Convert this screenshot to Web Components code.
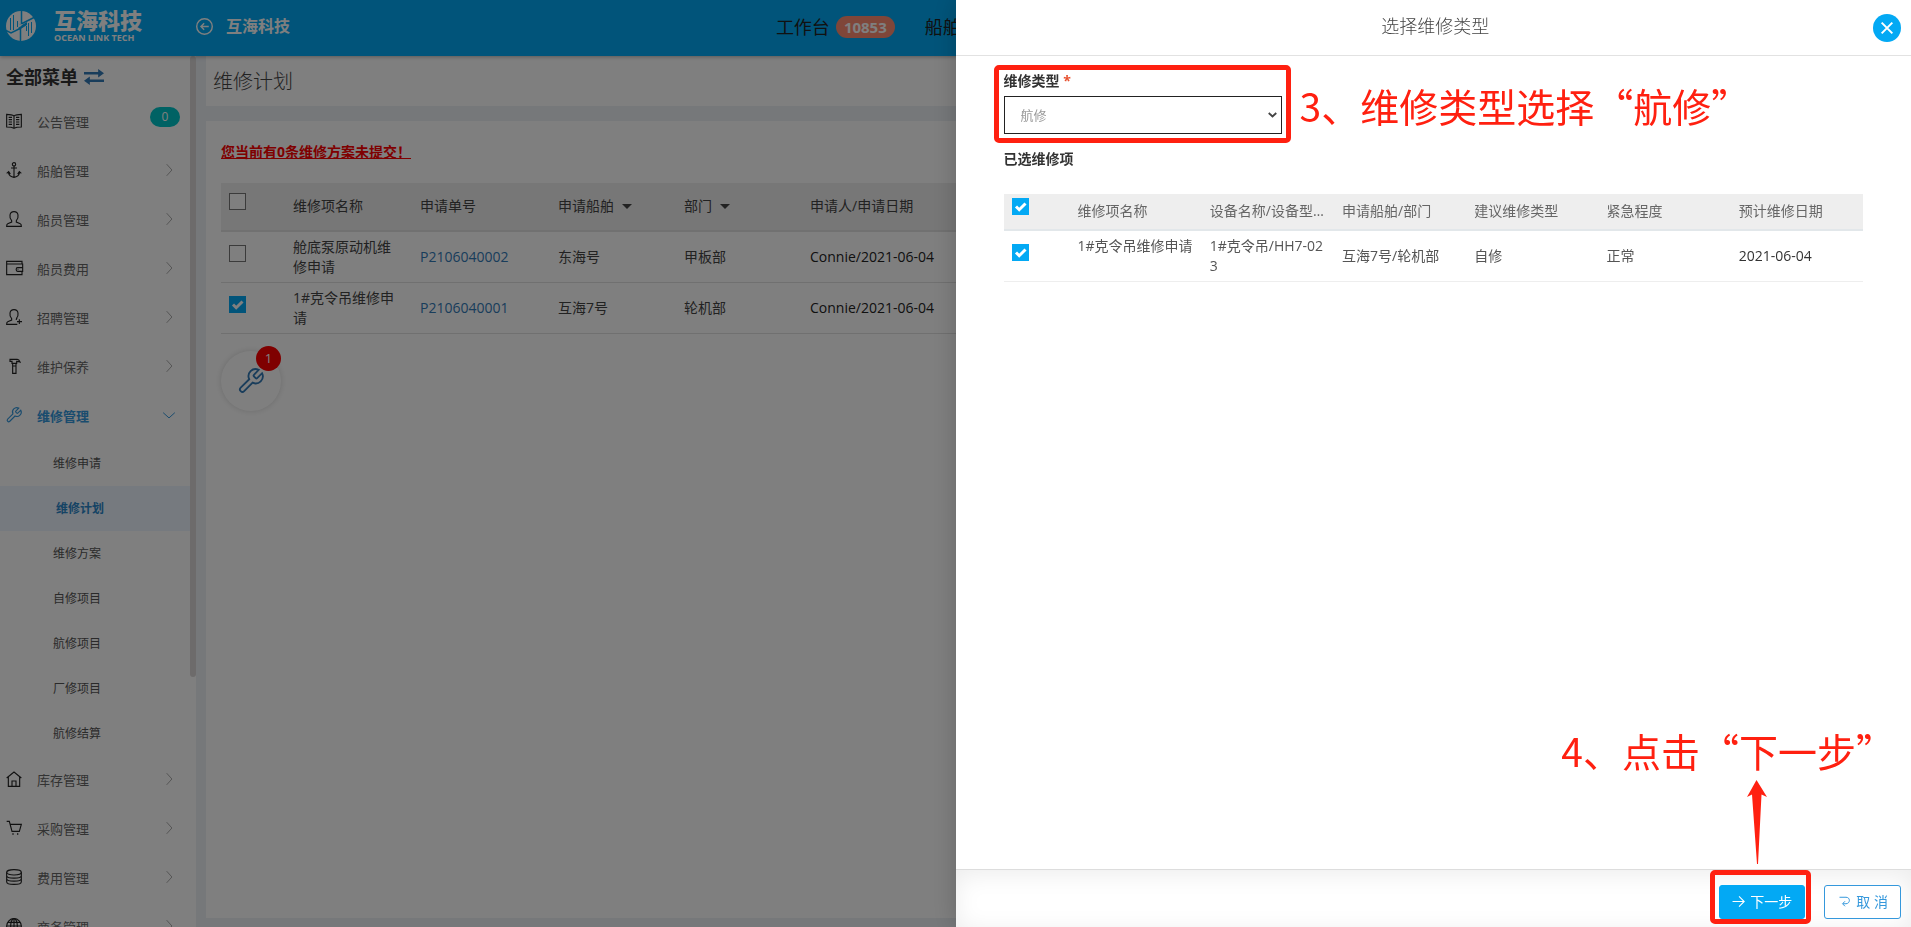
<!DOCTYPE html>
<html lang="zh-CN">
<head>
<meta charset="utf-8">
<meta name="viewport" content="width=device-width, initial-scale=1">
<title>选择维修类型</title>
<style>
  body {
    margin: 0;
    height: 100vh;
    overflow: hidden;
    background: #ecf0f5;
    color: #444;
    font: 14px/20px "Open Sans", "Noto Sans CJK SC", sans-serif;
  }
</style>
</head>
<body>
<app-frame>
  <top-bar slot="top"></top-bar>
  <side-menu slot="side">
    <menu-entry icon="book" badge="0">公告管理</menu-entry>
    <menu-entry icon="anchor">船舶管理</menu-entry>
    <menu-entry icon="user">船员管理</menu-entry>
    <menu-entry icon="wallet">船员费用</menu-entry>
    <menu-entry icon="userplus">招聘管理</menu-entry>
    <menu-entry icon="hammer">维护保养</menu-entry>
    <menu-entry icon="wrench" open>维修管理
      <sub-entry slot="sub">维修申请</sub-entry>
      <sub-entry slot="sub" current>维修计划</sub-entry>
      <sub-entry slot="sub">维修方案</sub-entry>
      <sub-entry slot="sub">自修项目</sub-entry>
      <sub-entry slot="sub">航修项目</sub-entry>
      <sub-entry slot="sub">厂修项目</sub-entry>
      <sub-entry slot="sub">航修结算</sub-entry>
    </menu-entry>
    <menu-entry icon="home">库存管理</menu-entry>
    <menu-entry icon="cart">采购管理</menu-entry>
    <menu-entry icon="coins">费用管理</menu-entry>
    <menu-entry icon="globe">商务管理</menu-entry>
  </side-menu>
  <plan-page></plan-page>
</app-frame>
<type-drawer></type-drawer>

<script>
const define = (name, html, setup) => {
  const template = document.createElement('template');
  template.innerHTML = html;
  customElements.define(name, class extends HTMLElement {
    constructor() {
      super();
      this.attachShadow({ mode: 'open' }).append(template.content.cloneNode(true));
    }
    connectedCallback() {
      if (setup) setup(this, this.shadowRoot);
    }
  });
};

/* All line icons are drawn on a 24 x 24 grid. */
const icons = {
  book: '<path d="M12 4.500C9.500 2.500 6 2 1 2v19c5 0 8.500.5 11 2 2.500-1.500 6-2 11-2V2c-5 0-8.500.5-11 2.500zM12 4.500V23M4 6.500h5M4 10h5M4 13.500h5M4 17h5M15 6.500h5M15 10h5M15 13.500h5M15 17h5"/>',
  anchor: '<circle cx="12" cy="3.500" r="2.500"/><path d="M12 6v17M7.500 9h9M1 17l3-2.500L6.500 18M23 17l-3-2.500-2.500 3.500M3.500 15.500C4.500 20 8 22.500 12 23c4-.5 7.500-3 8.500-7.500"/>',
  user: '<path d="M8.500 14.500C6 12 5.500 9 6 6c.5-3.500 3-5 6-5s5.500 1.500 6 5c.5 3 0 6-2.500 8.500v2l6 2.500c1.500.5 1.500 2 1.500 4H1c0-2 0-3.500 1.500-4l6-2.500z"/>',
  userplus: '<path d="M17 14l-1.500.5C18 12 18.500 9 18 6c-.5-3.500-3-5-6-5S6.500 2.500 6 6c-.5 3 0 6 2.500 8.500v2l-6 2.500C1 19.500 1 21 1 23h16M15.500 14.500v2M20 15.500v7M16.500 19H24"/>',
  wallet: '<path d="M24 6V2H1v20h23v-5M1 6h24v11h-7.500c-3 0-3-5.500 0-5.500H25"/><path d="M17.500 14h1"/>',
  hammer: '<path d="M6 2h11c2 0 3 1.500 4 4-2-1-3-1-5-1v3H9V5H6zM10 8v4M15 8v4M10 12h5v11h-5z"/>',
  wrench: '<path d="M14.700 6.300a1 1 0 0 0 0 1.400l1.600 1.600a1 1 0 0 0 1.400 0l4.500-4.500a6.500 6.500 0 0 1-8.700 8.700l-7.800 7.900a2.200 2.200 0 0 1-3.200-3.200l7.900-7.800a6.500 6.500 0 0 1 8.700-8.700z"/>',
  home: '<path d="M1 10.500L12 1.500l11 9M3.500 9v14h17V9M9 23v-8h6v8"/>',
  cart: '<path d="M1 2h4l4 15h11l3-10.500H6.500"/><path d="M9.500 21h2M16.500 21h2" stroke-width="2.500"/>',
  coins: '<ellipse cx="12" cy="5" rx="11" ry="4"/><path d="M1 5v14c0 5.500 22 5.500 22 0V5M1 10c0 5 22 5 22 0M1 14.500c0 5 22 5 22 0"/>',
  globe: '<circle cx="12" cy="12" r="11"/><ellipse cx="12" cy="12" rx="5" ry="11"/><path d="M12 1v22M1 12h22M3 6.500h18M3 17.500h18"/>',
  right: '<path d="M8 2l9 10-9 10"/>',
  down: '<path d="M2 8l10 9 10-9"/>',
  back: '<circle cx="12" cy="12" r="11"/><path d="M18 12H7M11.500 7.500L7 12l4.500 4.500"/>',
  swap: '<path d="M0 7.500h18M24 16.500H6" stroke-width="3"/><path d="M17 2.500v10l7-5zM7 11.500v10l-7-5z" fill="currentColor" stroke="none"/>',
  cross: '<path d="M4 4l16 16M20 4L4 20"/>',
  next: '<path d="M1 12h21M13 2.500l9.500 9.500-9.500 9.500"/>',
  undo: '<path d="M1 2.500h13c9 0 9 12.500 0 13H8M12 10.500l-5 5 5 5"/>'
};

define('line-icon', `
  <style>
    :host { display: inline-flex; flex: none; width: var(--icon, 16px); height: var(--icon, 16px); }
    svg { width: 100%; height: 100%; overflow: visible; fill: none; stroke: currentColor;
          stroke-width: var(--stroke, 1.5); }
  </style>
  <svg viewBox="0 0 24 24" aria-hidden="true"></svg>`,
  (host, root) => { root.querySelector('svg').innerHTML = icons[host.getAttribute('name')]; });

define('check-box', `
  <style>
    :host { display: block; position: relative; width: 17px; height: 17px; }
    input { appearance: none; display: block; box-sizing: border-box; width: 17px; height: 17px;
            margin: 0; border: 1px solid #777; background: #fff; }
    input:checked { border-color: #03a9f4; background: #03a9f4; }
    svg { position: absolute; inset: 0; display: none; fill: none; stroke: #fff; stroke-width: 3;
          pointer-events: none; }
    input:checked + svg { display: block; }
  </style>
  <input type="checkbox">
  <svg viewBox="0 0 17 17" aria-hidden="true"><path d="M4 8.500l3.200 3.200L13.500 5.500"/></svg>`,
  (host, root) => {
    const box = root.querySelector('input');
    box.checked = host.hasAttribute('checked');
    box.setAttribute('aria-label', host.getAttribute('label') || '选择');
  });

define('app-frame', `
  <style>
    :host { display: grid; grid-template: 56px minmax(0, 1fr) / 196px minmax(0, 1fr); height: 100vh; }
    ::slotted([slot=top]) { grid-column: 1 / -1; }
  </style>
  <slot name="top"></slot><slot name="side"></slot><slot></slot>`);

define('top-bar', `
  <style>
    :host { display: flex; align-items: center; position: relative; z-index: 1; background: #03a9f4;
            color: #fff; box-shadow: 0 1px 4px rgba(0,0,0,.3); }
    .brand { display: flex; align-items: center; gap: 18px; width: 190px; box-sizing: border-box;
             padding: 0 0 4px 6px; }
    .brand svg { width: 30px; height: 30px; }
    .name { display: flex; flex-direction: column; font-weight: 700; }
    .name b { font-size: 22px; line-height: 24px; }
    .name span { font-size: 9px; line-height: 12px; white-space: nowrap; }
    .company { display: flex; align-items: center; gap: 13px; padding: 0 0 4px 6px; color: inherit;
               font-size: 16px; font-weight: 700; text-decoration: none; }
    .company line-icon { --icon: 17px; --stroke: 2; }
    nav { display: flex; gap: 30px; box-sizing: border-box; width: 59.4%; margin-left: auto; padding-bottom: 2px; }
    nav a { display: flex; align-items: center; gap: 6px; color: #222; font-size: 18px; line-height: 24px;
            white-space: nowrap; text-decoration: none; }
    .count { padding: 0 8px; border-radius: 11px; background: #fe8c72; color: #fff; font-size: 15px;
             font-weight: 700; line-height: 22px; }
  </style>
  <div class="brand">
    <svg viewBox="0 0 30 30" aria-hidden="true">
      <circle cx="15" cy="15" r="15" fill="#fff"/>
      <g fill="none" stroke="#03a9f4">
        <path d="M15.500 0v13M16 12.500L29 6M0 19.500l5 2.500 9-4.500M14.500 17v13" stroke-width="1.500"/>
        <path d="M4.500 7v12M7.500 4v15M11.500 10v6M20.500 15v5M22.500 12v13M25.500 11v11" stroke-width="1"/>
        <path d="M12 12.500l4 1.500 5-3v3l-7 4.500-2-1.500 4-2.500z" fill="#03a9f4" stroke="none"/>
      </g>
    </svg>
    <div class="name"><b>互海科技</b><span>OCEAN LINK TECH</span></div>
  </div>
  <a class="company" href="#"><line-icon name="back"></line-icon>互海科技</a>
  <nav>
    <a href="#">工作台<span class="count">10853</span></a>
    <a href="#">船舶</a>
  </nav>`);

define('side-menu', `
  <style>
    :host { display: flex; overflow: hidden; background: #fff; }
    nav { flex: 1; }
    h2 { display: flex; align-items: center; gap: 6px; height: 42px; margin: 0; padding-left: 6px;
         color: #333; font-size: 18px; line-height: 42px; }
    h2 line-icon { --icon: 20px; color: #337ab7; }
    .track { width: 6px; }
    .thumb { height: 71.300%; border-radius: 3px; background: #dad7d7; }
  </style>
  <nav><h2>全部菜单<line-icon name="swap"></line-icon></h2><slot></slot></nav>
  <div class="track"><div class="thumb"></div></div>`);

define('menu-entry', `
  <style>
    :host { display: block; font-size: 13px; --stroke: 1.700; }
    a { display: flex; align-items: center; gap: 15px; box-sizing: border-box; height: 49px;
        padding: 0 14px 4px 6px; color: #222; text-decoration: none; }
    .text { flex: 1; padding-top: 2px; color: #666; }
    .arrow { --icon: 14px; color: #aaa; }
    .badge { width: 30px; margin: -8px -4px 0 0; border-radius: 10px; background: #00c4c8; color: #fff;
             font-size: 12px; line-height: 20px; text-align: center; }
    :host([open]) a, :host([open]) .text, :host([open]) .arrow { color: #3598dc; }
    :host([open]) .text { font-weight: 700; }
  </style>
  <a href="#"><line-icon class="lead"></line-icon><span class="text"><slot></slot></span></a>
  <slot name="sub"></slot>`,
  (host, root) => {
    const link = root.querySelector('a');
    const lead = document.createElement('line-icon');
    lead.setAttribute('name', host.getAttribute('icon'));
    root.querySelector('.lead').replaceWith(lead);
    const badge = host.getAttribute('badge');
    const end = document.createElement(badge ? 'span' : 'line-icon');
    end.className = badge ? 'badge' : 'arrow';
    if (badge) end.textContent = badge;
    else end.setAttribute('name', host.hasAttribute('open') ? 'down' : 'right');
    link.append(end);
  });

define('sub-entry', `
  <style>
    :host { display: block; font-size: 12px; }
    a { display: block; padding: 1px 0 0 53px; color: #555; line-height: 44px; text-decoration: none; }
    :host([current]) a { padding-left: 56px; background: #ecf4ff; color: #2b86c8; font-weight: 700; }
  </style>
  <a href="#"><slot></slot></a>`);

define('plan-page', `
  <style>
    :host { display: flex; flex-direction: column; gap: 15px; padding: 0 10px 9px; }
    h1 { margin: 0; padding: 1px 0 0 7px; background: #fff; font-size: 20px; font-weight: 300; line-height: 49px; }
    main { flex: 1; padding: 15px; background: #fff; }
    .notice { display: inline-block; margin: 6px 0 21px; color: red; font-weight: 700; }
    table { width: 100%; table-layout: fixed; border-collapse: collapse; }
    th, td { padding: 5px 8px; text-align: left; font-weight: 400; }
    th { height: 37px; padding: 4px 8px 6px; border-bottom: 2px solid #e2e2e2; background: #eee; }
    td { height: 40px; border-bottom: 1px solid #e0e0e0; word-break: break-all; }
    td a { color: #337ab7; text-decoration: none; }
    .latin { color: #222; }
    .tick { width: 48px; } .id { width: 122px; } .name { width: 111px; } .col { width: 110px; }
    check-box { margin-bottom: 8px; }
    .sort { display: inline-block; margin-left: 8px; border: 5px solid transparent; border-top-color: #444;
            border-bottom: 0; vertical-align: middle; }
    .float { position: relative; display: flex; align-items: center; justify-content: center; width: 60px;
             height: 60px; margin-top: 17px; padding: 0; border: 0; border-radius: 50%; background: #fff;
             color: #337ab7; box-shadow: 0 0 6px rgba(0,0,0,.15); font: inherit; --icon: 26px; --stroke: 1.700; }
    .float span { position: absolute; top: -5px; right: 0; width: 25px; border-radius: 50%; background: red;
                  color: #fff; font-size: 13px; line-height: 25px; text-align: center; }
  </style>
  <h1>维修计划</h1>
  <main>
    <a class="notice" href="#">您当前有0条维修方案未提交！</a>
    <table>
      <thead><tr>
        <th class="tick"><check-box label="全选"></check-box></th>
        <th class="name">维修项名称</th><th class="id">申请单号</th>
        <th class="col">申请船舶<span class="sort"></span></th>
        <th class="col">部门<span class="sort"></span></th>
        <th>申请人/申请日期</th>
      </tr></thead>
      <tbody>
        <tr><td><check-box></check-box></td><td>舱底泵原动机维修申请</td>
          <td><a href="#">P2106040002</a></td><td>东海号</td><td>甲板部</td>
          <td class="latin">Connie/2021-06-04</td></tr>
        <tr><td><check-box checked></check-box></td><td>1#克令吊维修申请</td>
          <td><a href="#">P2106040001</a></td><td>互海7号</td><td>轮机部</td>
          <td class="latin">Connie/2021-06-04</td></tr>
      </tbody>
    </table>
    <button class="float" type="button" aria-label="已选维修项"><line-icon name="wrench"></line-icon><span>1</span></button>
  </main>`);

/* Red frame drawn around whatever is slotted in. */
define('mark-box', `
  <style>
    :host { display: block; position: relative; }
    .frame { position: absolute; inset: var(--out, -6px -9px -9px -10px); border: 5px solid #ff2010;
             border-radius: 5px; pointer-events: none; }
  </style>
  <slot></slot><div class="frame"></div>`);

define('guide-note', `
  <style>
    :host { display: block; color: #ff2010; font: 39px/48px "Noto Sans CJK SC", sans-serif; white-space: nowrap; }
  </style>
  <slot></slot>`);

define('type-drawer', `
  <style>
    :host { position: fixed; z-index: 10; inset: 0; display: flex; justify-content: flex-end;
            background: rgba(0,0,0,.5); }
    section { position: relative; display: flex; flex-direction: column; width: 50%; background: #fff;
              box-shadow: 0 0 24px rgba(0,0,0,.2); }
    header { display: flex; align-items: center; height: 55px; padding: 0 10px 0 42px;
             border-bottom: 1px solid #e2e2e2; }
    h2 { flex: 1; margin: 0; padding-bottom: 4px; font-size: 18px; font-weight: 300; text-align: center; }
    .close { display: flex; align-items: center; justify-content: center; width: 28px; height: 28px; padding: 0;
             border: 0; border-radius: 50%; background: #03a9f4; color: #fff; --stroke: 3; }
    .body { flex: 1; padding: 15px 48px; }
    .row { display: flex; align-items: center; gap: 18px; height: 63px; }
    .row guide-note { padding-top: 4px; }
    mark-box.field { width: 278px; }
    label { display: block; margin-bottom: 5px; font-weight: 700; }
    label span { color: #e7502e; }
    .pick { position: relative; }
    select { appearance: none; display: block; box-sizing: border-box; width: 100%; height: 38px;
             padding: 0 16px; border: 1px solid #222; border-radius: 0; background: #fff; color: #999;
             font: 13px "Open Sans", "Noto Sans CJK SC", sans-serif; }
    .pick line-icon { position: absolute; top: 14px; right: 5px; --icon: 9px; --stroke: 5; pointer-events: none; }
    h3 { margin: 15px 0 25px; font-size: 14px; line-height: 20px; }
    label, h3 { color: #333; }
    table { width: 100%; table-layout: fixed; border-collapse: collapse; }
    th, td { padding: 5px 8px; text-align: left; font-weight: 400; }
    th { height: 25px; padding: 4px 8px 6px; overflow: hidden; border-bottom: 2px solid #e2e7ea;
         background: #eee; color: #666; white-space: nowrap; text-overflow: ellipsis; }
    td { height: 40px; border-bottom: 1px solid #eee; color: #555; word-break: break-all; }
    td.latin { color: #333; }
    .tick { width: 50px; } .top { vertical-align: top; }
    check-box { margin-bottom: 8px; }
    footer { display: flex; justify-content: flex-end; align-items: center; gap: 19px; height: 58px;
             padding: 6px 10px 0; box-sizing: border-box; border-top: 1px solid #ddd;
             box-shadow: inset 0 4px 24px rgba(0,0,0,.08); }
    .btn { display: flex; align-items: center; justify-content: center; gap: 5px; box-sizing: border-box;
           height: 34px; border: 1px solid #03a9f4; border-radius: 3px; background: #03a9f4; color: #fff;
           font: 14px/20px "Open Sans", "Noto Sans CJK SC", sans-serif; padding: 0 12px; white-space: nowrap;
           --icon: 13px; --stroke: 2; }
    .cancel { border-color: #3598dc; background: #fff; color: #3598dc; padding: 0 12px 0 14px; --icon: 12px; }
    .next { --out: -15px -6px -5px -9px; }
    .step { position: absolute; right: 16px; bottom: 63px; }
    .step svg { display: block; width: 20px; height: 84px; margin: 6px 0 0 186px; fill: #ff2010; }
  </style>
  <section role="dialog" aria-label="选择维修类型">
    <header><h2>选择维修类型</h2>
      <button class="close" type="button" aria-label="关闭"><line-icon name="cross"></line-icon></button></header>
    <div class="body">
      <div class="row">
        <mark-box class="field">
          <label for="type">维修类型 <span>*</span></label>
          <div class="pick"><select id="type"><option>航修</option></select><line-icon name="down"></line-icon></div>
        </mark-box>
        <guide-note>3、维修类型选择“航修”</guide-note>
      </div>
      <h3>已选维修项</h3>
      <table>
        <thead><tr><th class="tick"><check-box checked label="全选"></check-box></th><th>维修项名称</th>
          <th>设备名称/设备型号</th><th>申请船舶/部门</th><th>建议维修类型</th><th>紧急程度</th><th>预计维修日期</th></tr></thead>
        <tbody><tr><td><check-box checked></check-box></td><td class="top">1#克令吊维修申请</td>
          <td>1#克令吊/HH7-023</td><td>互海7号/轮机部</td><td>自修</td><td>正常</td><td class="latin">2021-06-04</td></tr></tbody>
      </table>
    </div>
    <footer>
      <mark-box class="next"><button class="btn" type="button"><line-icon name="next"></line-icon>下一步</button></mark-box>
      <button class="btn cancel" type="button"><line-icon name="undo"></line-icon>取 消</button>
    </footer>
    <div class="step">
      <guide-note>4、点击“下一步”</guide-note>
      <svg viewBox="0 0 20 84" aria-hidden="true"><path d="M9.500 0L20 17l-5.500-2.500L11 84H10L5 14.500 0 17z"/></svg>
    </div>
  </section>`);
</script>
</body>
</html>
